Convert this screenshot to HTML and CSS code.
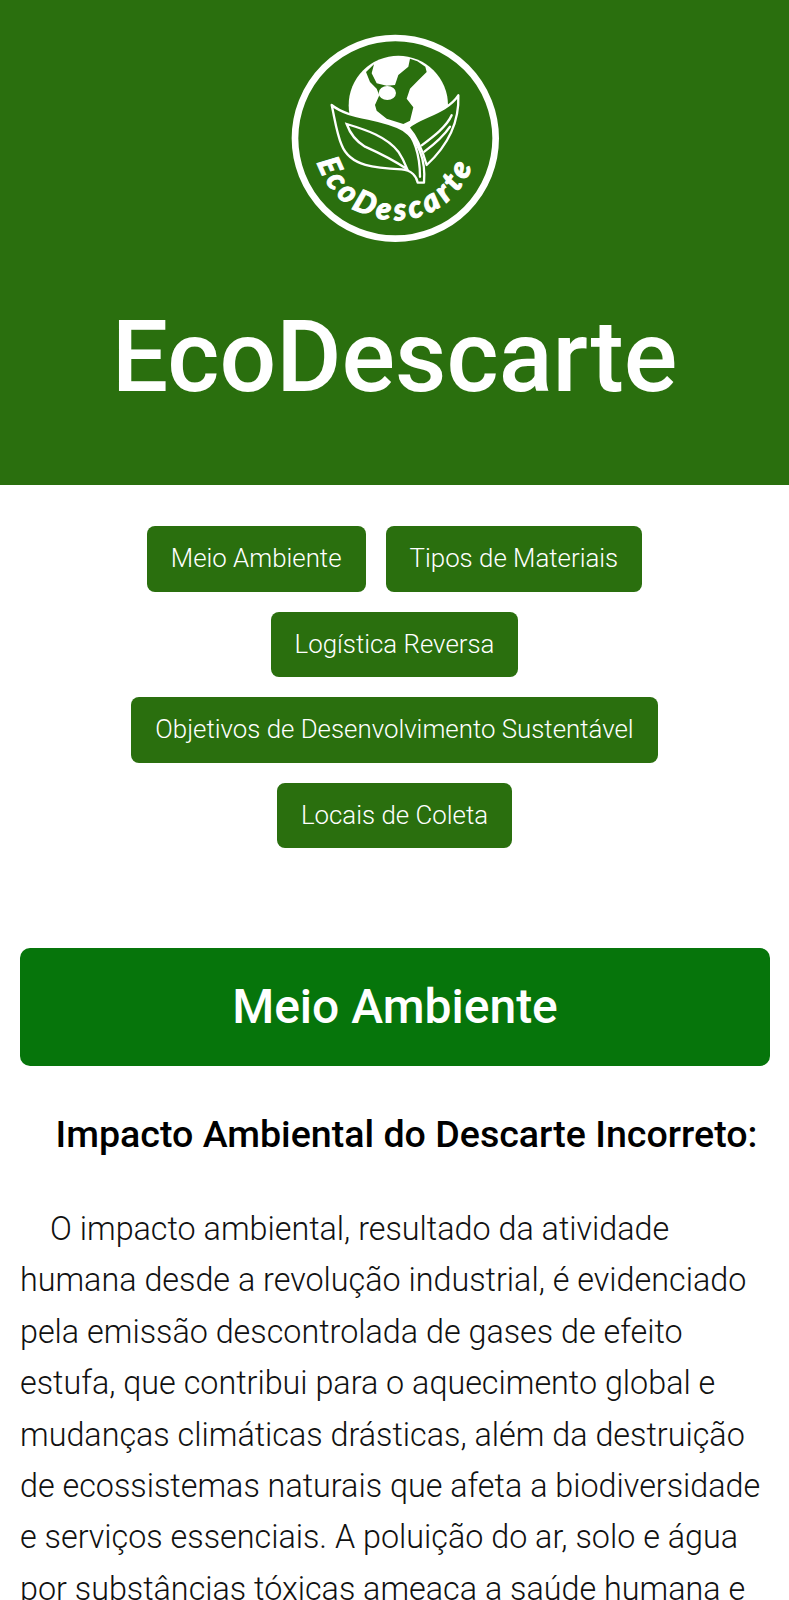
FILE: index.html
```html
<!DOCTYPE html>
<html lang="pt-BR">
<head>
    <meta charset="UTF-8">
    <meta name="viewport" content="width=device-width, initial-scale=1.0">
    <title>EcoDescarte</title>
    <link rel="stylesheet" href="styles.css">
</head>
<body>

<header class="topo">
    <svg class="logo" viewBox="0 0 750 720" role="img" aria-label="Logo EcoDescarte">
        <circle class="logo-anel" cx="376" cy="355" r="301"/>
        <circle class="logo-branco" cx="385" cy="256" r="149"/>
        <path class="logo-verde" d="M420 116 L442 124 L466 140 L470 156 L442 184 L420 206 L410 236 L430 262 L420 302 L400 312 L350 296 L320 272 L315 255 L328 226 L320 206 L300 186 L288 156 L312 133 L305 160 L320 190 L350 197 L375 195 L385 165 L415 140 Z"/>
        <ellipse class="logo-branco" cx="352" cy="219" rx="26" ry="21"/>
        <path class="logo-folha" d="M415 322 C450 290 530 280 565 226 C568 300 540 370 470 435 C460 400 440 350 415 322 Z"/>
        <path class="logo-folha-fina" d="M545 286 C530 320 490 350 455 376 M540 320 C520 350 490 375 463 395"/>
        <path class="logo-folha" d="M185 255 C240 300 330 290 400 330 C445 360 468 420 462 488 L443 488 C440 470 425 450 395 448 C320 445 240 440 215 375 C200 340 195 300 185 255 Z"/>
        <path class="logo-folha-fina" d="M230 312 C290 330 350 350 385 395 C395 410 405 430 412 448 C370 420 330 400 285 380 C260 365 240 340 230 312 Z"/>
        <path class="logo-folha-fina" d="M405 325 C430 350 450 400 450 470"/>
        <defs>
            <path id="arco" d="M135 400 A245 245 0 0 0 617 400"/>
        </defs>
        <text class="logo-texto"><textPath href="#arco" startOffset="50%" text-anchor="middle">EcoDescarte</textPath></text>
    </svg>
    <h1 class="titulo">EcoDescarte</h1>
</header>

<nav class="menu">
    <a class="menu-item" href="#meio-ambiente">Meio Ambiente</a>
    <a class="menu-item" href="#materiais">Tipos de Materiais</a>
    <a class="menu-item" href="#logistica">Logística Reversa</a>
    <a class="menu-item" href="#ods">Objetivos de Desenvolvimento Sustentável</a>
    <a class="menu-item" href="#coleta">Locais de Coleta</a>
</nav>

<section class="secao" id="meio-ambiente">
    <h2 class="secao-titulo">Meio Ambiente</h2>
    <h3 class="subtitulo">Impacto Ambiental do Descarte Incorreto:</h3>
    <p class="texto">O impacto ambiental, resultado da atividade humana desde a revolução industrial, é evidenciado pela emissão descontrolada de gases de efeito estufa, que contribui para o aquecimento global e mudanças climáticas drásticas, além da destruição de ecossistemas naturais que afeta a biodiversidade e serviços essenciais. A poluição do ar, solo e água por substâncias tóxicas ameaça a saúde humana e</p>
</section>

</body>
</html>
```

FILE: styles.css
```css
html, body {
    height: 1600px;
    overflow: hidden;
}
body {
    margin: 0;
    background: #fff;
    color: #111;
    font-family: Roboto, "Noto Sans", sans-serif;
}
.topo {
    height: 485px;
    background: #2a6f0e;
    display: flex;
    flex-direction: column;
    align-items: center;
    padding-top: 20px;
    box-sizing: border-box;
}
.logo {
    width: 250px;
    height: 240px;
    flex: none;
}
.logo-anel {
    fill: none;
    stroke: #fff;
    stroke-width: 20;
}
.logo-branco {
    fill: #fff;
}
.logo-verde {
    fill: #2a6f0e;
}
.logo-folha {
    fill: #2a6f0e;
    stroke: #fff;
    stroke-width: 7;
    stroke-linejoin: round;
}
.logo-folha-fina {
    fill: none;
    stroke: #fff;
    stroke-width: 7;
    stroke-linecap: round;
}
.logo-texto {
    fill: #fff;
    stroke: #fff;
    stroke-width: 3;
    font-family: Lato, sans-serif;
    font-size: 92px;
    font-weight: 900;
    font-style: italic;
    letter-spacing: 13px;
}
.titulo {
    margin: 38px 0 0;
    color: #fff;
    font-size: 100px;
    font-weight: 500;
    line-height: 117px;
}
.menu {
    display: flex;
    flex-wrap: wrap;
    justify-content: center;
    gap: 20px;
    padding: 41px 40px 0;
}
.menu-item {
    background: #2a6f0e;
    color: #fff;
    font-size: 25.85px;
    font-weight: 300;
    line-height: 65.5px;
    padding: 0 24px;
    border-radius: 8px;
    text-decoration: none;
}
.secao {
    padding: 100px 19px 0 20px;
}
.secao-titulo {
    margin: 0;
    height: 118px;
    line-height: 118px;
    background: #06750b;
    color: #fff;
    border-radius: 10px;
    text-align: center;
    font-size: 48px;
    font-weight: 500;
}
.subtitulo {
    margin: 44px 0 0;
    font-size: 37.6px;
    font-weight: 500;
    line-height: 48px;
    text-align: center;
    text-indent: 23px;
    color: #000;
}
.texto {
    margin: 46px 0 0;
    font-size: 32.3px;
    font-weight: 300;
    line-height: 51.4px;
    text-indent: 30px;
}
```
